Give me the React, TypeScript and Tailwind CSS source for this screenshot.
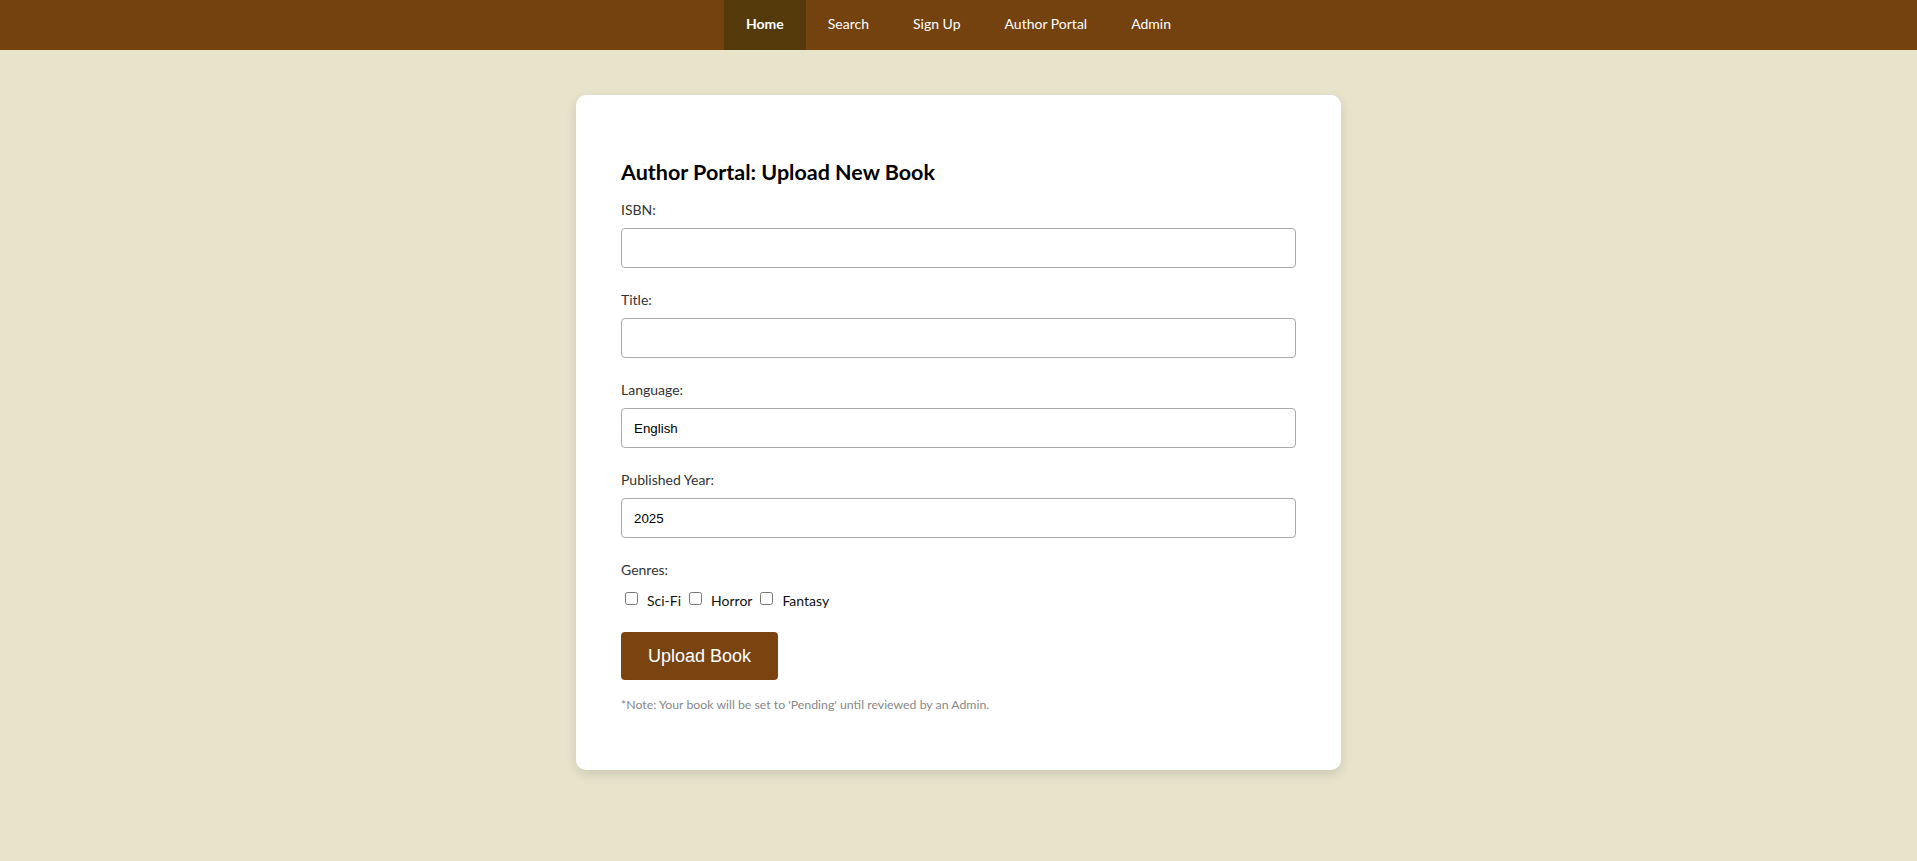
import React from 'react';

const navItems = ['Home', 'Search', 'Sign Up', 'Author Portal', 'Admin'];
const genres = ['Sci-Fi', 'Horror', 'Fantasy'];

const Field = ({ label, value = '' }: { label: string; value?: string }) => (
  <div className="mb-[23px]">
    <label className="block text-[14px] leading-[18px] text-[#333] mb-[9px]">{label}</label>
    <input
      type="text"
      defaultValue={value}
      className="block w-full h-[40px] px-[12px] border border-[#aaa] rounded-[4px] bg-white text-[13.33px] text-black outline-none [font-family:'Liberation_Sans',Arial,sans-serif]"
    />
  </div>
);

export default function App() {
  return (
    <div className="min-h-[861px] bg-[#e8e3cb] [font-family:Lato,'Segoe_UI',sans-serif]">
      <nav className="h-[50px] bg-[#74420f] flex justify-center">
        {navItems.map((item, i) => (
          <a
            key={item}
            href="#"
            className={`flex items-center px-[22px] pb-[3px] text-[14px] text-white ${
              i === 0 ? 'bg-[#543a0b] font-bold' : ''
            }`}
          >
            {item}
          </a>
        ))}
      </nav>

      <main className="pt-[45px] pb-[40px]">
        <div className="w-[765px] mx-auto bg-white rounded-[10px] shadow-[0_4px_12px_rgba(0,0,0,0.12)] px-[45px] pt-[64px] pb-[57px]">
          <h2 className="text-[21.5px] leading-[26px] font-bold text-black mb-[16px]">
            Author Portal: Upload New Book
          </h2>

          <Field label="ISBN:" />
          <Field label="Title:" />
          <Field label="Language:" value="English" />
          <Field label="Published Year:" value="2025" />

          <label className="block text-[14px] leading-[18px] text-[#333] mb-[10px]">Genres:</label>
          <div className="flex items-center h-[22px] text-[14px] text-[#111]">
            {genres.map((g) => (
              <label key={g} className="flex items-center mr-[4px]">
                <input type="checkbox" className="w-[13px] h-[13px] ml-[4px] mr-[9px] -mt-[3px]" />
                <span>{g}</span>
              </label>
            ))}
          </div>

          <button className="mt-[21px] h-[48px] px-[27px] rounded-[4px] bg-[#7a4411] text-white text-[18px] [font-family:'Liberation_Sans',Arial,sans-serif]">
            Upload Book
          </button>

          <p className="mt-[17px] text-[12.3px] leading-[16px] text-[#888]">
            *Note: Your book will be set to 'Pending' until reviewed by an Admin.
          </p>
        </div>
      </main>
    </div>
  );
}
